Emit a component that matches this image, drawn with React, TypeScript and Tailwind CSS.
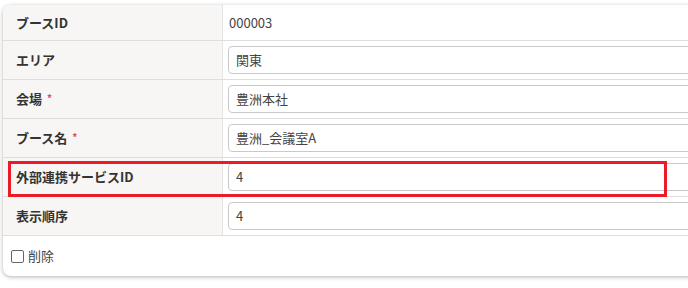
import React from 'react';

const font = { fontFamily: '"Noto Sans CJK JP", "Noto Sans", sans-serif' };

type Row = { label: string; required?: boolean; value: string; input: boolean };

const rows: Row[] = [
  { label: 'ブースID', value: '000003', input: false },
  { label: 'エリア', value: '関東', input: true },
  { label: '会場', required: true, value: '豊洲本社', input: true },
  { label: 'ブース名', required: true, value: '豊洲_会議室A', input: true },
  { label: '外部連携サービスID', value: '4', input: true },
  { label: '表示順序', value: '4', input: true },
];

export default function App() {
  return (
    <div className="relative w-[688px] h-[288px] overflow-hidden bg-white pl-[3px] pt-[5px]" style={font}>
      <div className="w-[740px] rounded-lg bg-white shadow-[0_1px_4px_rgba(0,0,0,0.3)] overflow-hidden">
        {rows.map((r, i) => (
          <div
            key={r.label}
            className={`grid grid-cols-[220px_1fr] border-b border-[#dedede] ${i === 0 ? 'h-[36px]' : 'h-[39px]'}`}
          >
            <div className="flex items-center bg-[#f7f6f4] border-r border-[#e4e4e4] pl-[13px] text-[13px] font-bold text-[#333]">
              {r.label}
              {r.required && <span className="ml-[5px] text-[10px] text-[#e8445a] -mt-[4px]">*</span>}
            </div>
            <div className="flex items-center pl-[5px]">
              {r.input ? (
                <div className="flex items-center h-[28px] w-full rounded-[4px] border border-[#c9c9c9] bg-white pl-[7px] text-[13px] text-[#444]">
                  {r.value}
                </div>
              ) : (
                <span className="pl-[1px] text-[13px] text-[#444]">{r.value}</span>
              )}
            </div>
          </div>
        ))}
        <div className="flex items-center h-[40px] pl-[8px] text-[13px] text-[#444]">
          <span className="inline-block w-[13px] h-[13px] border border-[#666] rounded-[2px] bg-white mr-[4px]" />
          削除
        </div>
      </div>
      <div className="absolute left-[8px] top-[161px] w-[659px] h-[36px] border-[3px] border-[#ea1c27] pointer-events-none" />
    </div>
  );
}
